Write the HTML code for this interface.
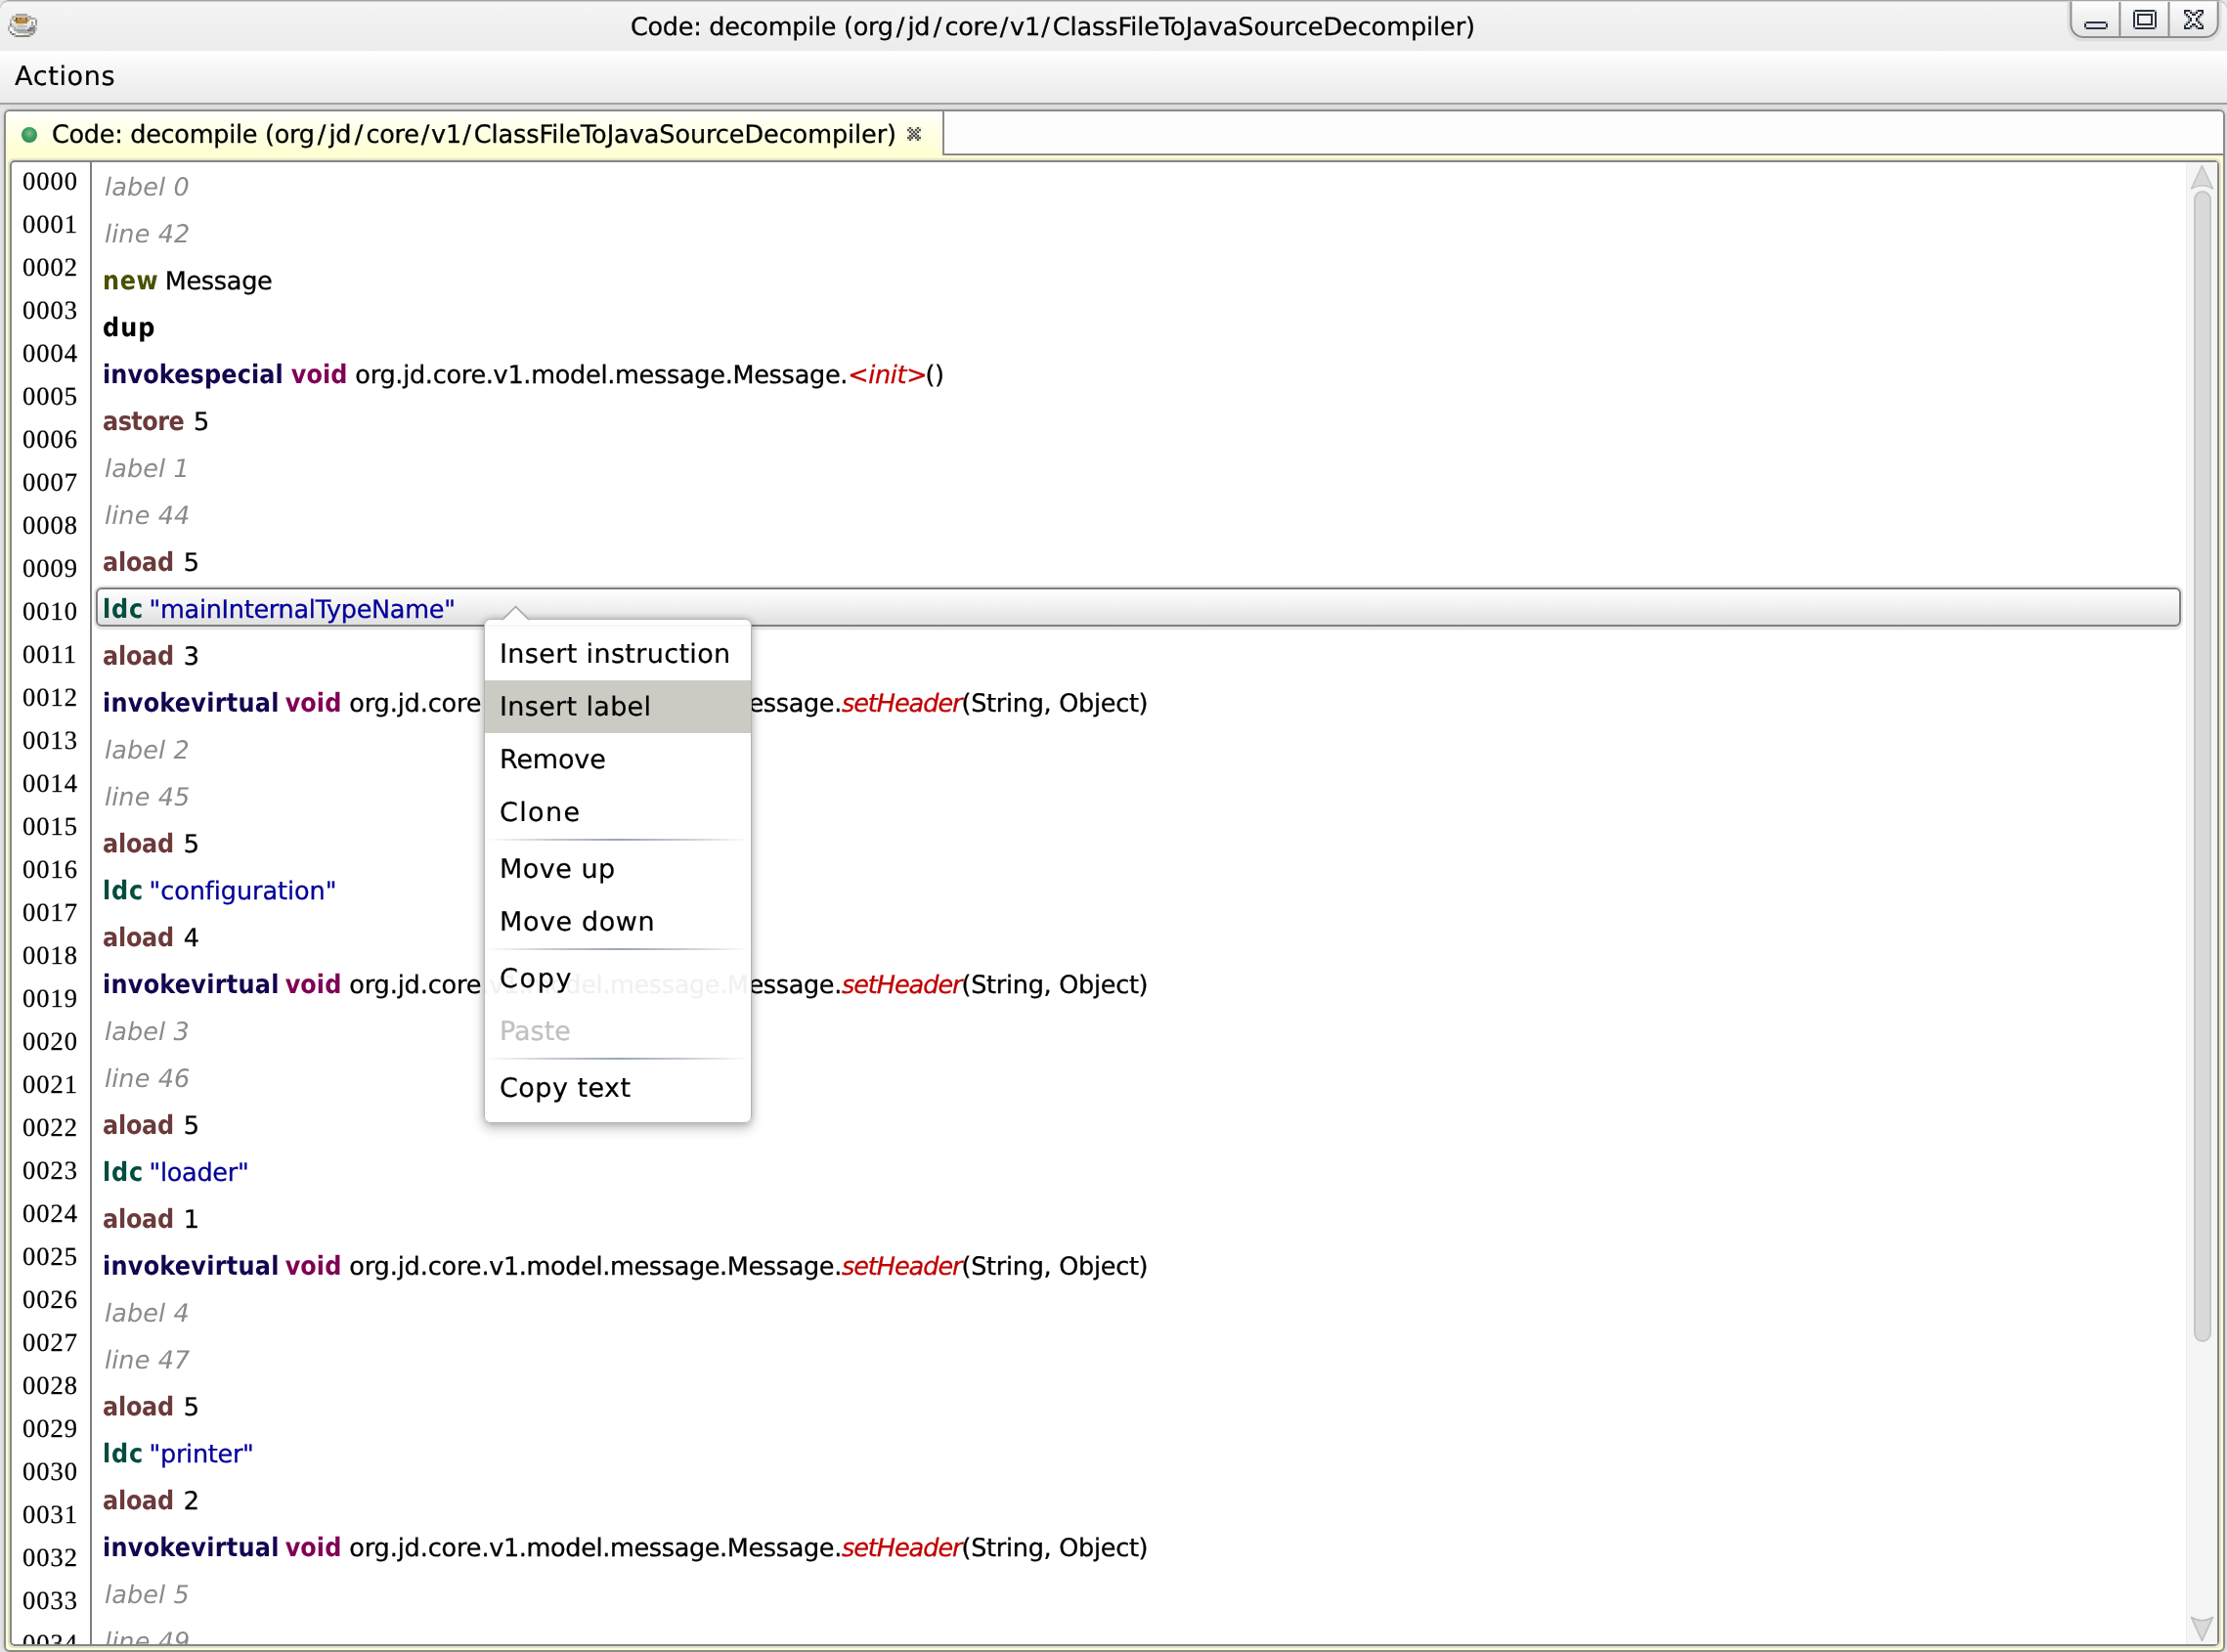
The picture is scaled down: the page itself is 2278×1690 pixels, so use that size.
<!DOCTYPE html>
<html lang="en"><head><meta charset="utf-8"><title>Code: decompile (org/jd/core/v1/ClassFileToJavaSourceDecompiler)</title>
<style>
*{box-sizing:border-box}
html,body{margin:0;padding:0}
body{width:2278px;height:1690px;overflow:hidden;background:#e6e6e6;position:relative;font-family:"DejaVu Sans","Liberation Sans",sans-serif;color:#000;-webkit-font-smoothing:antialiased;text-rendering:geometricPrecision}
#title,#actions,#tabtxt,#lnclip,#rowclip,.pi{will-change:transform}
#actions,.pi{-webkit-text-stroke:0.2px}
#title,#tabtxt{-webkit-text-stroke:0.3px}
.ln{-webkit-text-stroke:0.25px}
.tb{letter-spacing:-0.065px}
.s1{margin:0 3.5px 0 3px}.s2{margin:0 3.3px 0 3.7px}.s3{margin:0 2.1px 0 2.1px}.s4{margin:0 3.1px 0 1.5px}
.abs{position:absolute}
#titlebar{left:0;top:0;width:2278px;height:52px;background:linear-gradient(#f5f5f5,#ebebeb);border-top:1px solid #a4a4a4;border-radius:9px 9px 0 0;box-shadow:inset 0 1px 0 #cfcfcf}
#title{left:645.3px;top:3px;height:50px;line-height:50px;font-size:25.5px;letter-spacing:-0.28px;white-space:pre;text-shadow:0 1px 0 #fff}
#menubar{left:0;top:52px;width:2278px;height:53px;background:linear-gradient(#ffffff,#f3f3f3 50%,#ebebeb)}
#menuline{left:0;top:105px;width:2278px;height:2px;background:#a2a2a2}
#menuline2{left:0;top:107px;width:2278px;height:5px;background:linear-gradient(#dcdcdc,#e8e8e8)}
#actions{left:15px;top:52px;height:53px;line-height:53px;font-size:27px;letter-spacing:0.65px;white-space:pre}
#pane{left:4px;top:112px;width:2272px;height:1578px;border:2px solid #8c8c8c;border-radius:6px;background:#ffffd2;box-shadow:0 0 0 1px #d2d2d2,0 0 4px 1px #cfcfcf}
#strip{left:966px;top:114px;width:1308px;height:43px;background:#fdfdfd;border-radius:0 4px 0 0}
#stripline{left:964px;top:157px;width:1310px;height:2px;background:#8a8a8a}
#tab{left:6px;top:114px;width:958px;height:47px;background:linear-gradient(#fffffc,#ffffe4 50%,#ffffcf);border-radius:4px 0 0 0}
#tabr{left:964px;top:114px;width:2px;height:45px;background:#8c8c8c}
#tabtxt{left:53px;top:115px;height:46px;line-height:46px;font-size:25.5px;letter-spacing:-0.28px;white-space:pre}
#dot{left:22px;top:130px;width:16px;height:16px;border-radius:50%;background:radial-gradient(circle at 50% 40%,#7fbf8f 0,#3f9a62 45%,#1f8450 100%)}
#light{left:8px;top:162px;width:2264px;height:1524px;border:2px solid #e3e3cd;border-radius:6px}
#code{left:10px;top:164px;width:2260px;height:1520px;border:2px solid #858585;border-radius:5px;background:#fff;overflow:hidden}
#gsep{left:92px;top:166px;width:2px;height:1516px;background:#7e7e7e}
.ln{position:absolute;left:23px;height:44px;line-height:44px;font-family:"Liberation Serif","DejaVu Serif",serif;font-size:26.5px;letter-spacing:1px;white-space:pre}
#lnclip{left:12px;top:166px;width:80px;height:1516px;overflow:hidden}
#rowclip{left:94px;top:166px;width:2142px;height:1516px;overflow:hidden}
.row{-webkit-text-stroke:0.3px;position:absolute;left:105px;height:48px;line-height:48px;font-size:25.5px;letter-spacing:-0.28px;white-space:pre}
.b{font-family:"DejaVu Sans Condensed","DejaVu Sans","Liberation Sans",sans-serif;font-weight:bold;font-size:26.6px;letter-spacing:0.2px;-webkit-text-stroke:0}
.cm{color:#8a8a8a;font-style:italic;letter-spacing:0.1px;margin-left:2px;-webkit-text-stroke:0}
.k-new{color:#4c5000;letter-spacing:0.67px;margin-right:-1.5px}
.k-dup{color:#000;letter-spacing:1.03px}
.k-inv{color:#15054f;letter-spacing:0.15px;margin-right:0px}
.k-iv{color:#15054f;letter-spacing:0.27px;margin-right:-1.8px}
.k-void{color:#7f0055;letter-spacing:0.09px;margin-right:0px}
.k-ld{color:#6b3a3a;letter-spacing:-0.22px;margin-right:2px}
.k-st{color:#6b3a3a;letter-spacing:-0.51px;margin-right:2px}
.k-ldc{color:#004d40;letter-spacing:0.8px;margin-right:-2.2px}
.str{color:#00009a}
.pk{letter-spacing:-0.35px}.pka{letter-spacing:-0.12px}
.mt{color:#c00000;font-style:italic;letter-spacing:-1.03px}
.mi{letter-spacing:-0.3px;margin-right:-2px}
#sel{left:98px;top:601px;width:2133px;height:40px;border:2px solid #7f7f7f;border-radius:6px;background:linear-gradient(#ffffff,#f2f2f2 45%,#e0e0e0);box-shadow:0 0 0 2px #e6e6e6,0 2px 2px 1px #dcdcdc}
#track{left:2236px;top:166px;width:32px;height:1516px;background:#f5f5f5;border-left:1px solid #ececec}
#thumb{left:2244px;top:195px;width:18px;height:1178px;border-radius:9px;background:#dadada;border:2px solid #c6c6c6}
#pop{left:495px;top:633px;width:274px;height:516px;border-radius:7px;background:rgba(255,255,255,0.94);border:1.5px solid #b4b4b4;box-shadow:0 5px 12px 1px rgba(0,0,0,0.22),0 0 7px rgba(0,0,0,0.2)}
.pi{position:absolute;left:496px;width:272px;height:54px;line-height:56px;overflow:hidden;padding-left:15px;font-size:27px;letter-spacing:0.2px;white-space:pre}
.psep{position:absolute;left:497px;width:270px;height:2px;background:linear-gradient(90deg,rgba(150,160,175,0),rgba(150,160,175,0.55) 25%,rgba(150,160,175,0.95) 50%,rgba(150,160,175,0.55) 75%,rgba(150,160,175,0))}
</style></head>
<body>
<div id="titlebar" class="abs"></div>
<div id="title" class="abs">Code: decompile (org<span class="s1">/</span>jd<span class="s2">/</span>core<span class="s3">/</span>v1<span class="s4">/</span><span class="tb">ClassFileToJavaSourceDecompiler)</span></div>
<div id="menubar" class="abs"></div>
<div id="actions" class="abs">Actions</div>
<div id="menuline" class="abs"></div>
<div id="menuline2" class="abs"></div>
<div id="pane" class="abs"></div>
<div id="strip" class="abs"></div>
<div id="stripline" class="abs"></div>
<div id="tab" class="abs"></div>
<div id="tabr" class="abs"></div>
<div id="dot" class="abs"></div>
<div id="tabtxt" class="abs">Code: decompile (org<span class="s1">/</span>jd<span class="s2">/</span>core<span class="s3">/</span>v1<span class="s4">/</span><span class="tb">ClassFileToJavaSourceDecompiler)</span></div>
<div id="light" class="abs"></div>
<div id="code" class="abs"></div>
<div id="lnclip" class="abs"><div class="abs" style="left:-12px;top:-166px">
<div class="ln" style="top:163px">0000</div>
<div class="ln" style="top:207px">0001</div>
<div class="ln" style="top:251px">0002</div>
<div class="ln" style="top:295px">0003</div>
<div class="ln" style="top:339px">0004</div>
<div class="ln" style="top:383px">0005</div>
<div class="ln" style="top:427px">0006</div>
<div class="ln" style="top:471px">0007</div>
<div class="ln" style="top:515px">0008</div>
<div class="ln" style="top:559px">0009</div>
<div class="ln" style="top:603px">0010</div>
<div class="ln" style="top:647px">0011</div>
<div class="ln" style="top:691px">0012</div>
<div class="ln" style="top:735px">0013</div>
<div class="ln" style="top:779px">0014</div>
<div class="ln" style="top:823px">0015</div>
<div class="ln" style="top:867px">0016</div>
<div class="ln" style="top:911px">0017</div>
<div class="ln" style="top:955px">0018</div>
<div class="ln" style="top:999px">0019</div>
<div class="ln" style="top:1043px">0020</div>
<div class="ln" style="top:1087px">0021</div>
<div class="ln" style="top:1131px">0022</div>
<div class="ln" style="top:1175px">0023</div>
<div class="ln" style="top:1219px">0024</div>
<div class="ln" style="top:1263px">0025</div>
<div class="ln" style="top:1307px">0026</div>
<div class="ln" style="top:1351px">0027</div>
<div class="ln" style="top:1395px">0028</div>
<div class="ln" style="top:1439px">0029</div>
<div class="ln" style="top:1483px">0030</div>
<div class="ln" style="top:1527px">0031</div>
<div class="ln" style="top:1571px">0032</div>
<div class="ln" style="top:1615px">0033</div>
<div class="ln" style="top:1659px">0034</div>
</div></div>
<div id="gsep" class="abs"></div>
<div id="sel" class="abs"></div>
<div id="rowclip" class="abs"><div class="abs" style="left:-94px;top:-166px">
<div class="row" style="top:168px"><span class="cm">label 0</span></div>
<div class="row" style="top:216px"><span class="cm">line 42</span></div>
<div class="row" style="top:264px"><span class="b k-new">new</span> Message</div>
<div class="row" style="top:312px"><span class="b k-dup">dup</span></div>
<div class="row" style="top:360px"><span class="b k-inv">invokespecial</span> <span class="b k-void">void</span> <span class="pk2">org.jd.core.v1.model.message.Message.</span><span class="mt mi">&lt;init&gt;</span><span class="ar">()</span></div>
<div class="row" style="top:408px"><span class="b k-st">astore</span> <span class="num">5</span></div>
<div class="row" style="top:456px"><span class="cm">label 1</span></div>
<div class="row" style="top:504px"><span class="cm">line 44</span></div>
<div class="row" style="top:552px"><span class="b k-ld">aload</span> <span class="num">5</span></div>
<div class="row" style="top:600px"><span class="b k-ldc">ldc</span> <span class="str">&quot;mainInternalTypeName&quot;</span></div>
<div class="row" style="top:648px"><span class="b k-ld">aload</span> <span class="num">3</span></div>
<div class="row" style="top:696px"><span class="b k-iv">invokevirtual</span> <span class="b k-void">void</span> <span class="pk"><span class="pka">org.jd.core</span>.v1.model.message.Message.</span><span class="mt">setHeader</span><span class="ar">(String, Object)</span></div>
<div class="row" style="top:744px"><span class="cm">label 2</span></div>
<div class="row" style="top:792px"><span class="cm">line 45</span></div>
<div class="row" style="top:840px"><span class="b k-ld">aload</span> <span class="num">5</span></div>
<div class="row" style="top:888px"><span class="b k-ldc">ldc</span> <span class="str" style="letter-spacing:-0.05px">&quot;configuration&quot;</span></div>
<div class="row" style="top:936px"><span class="b k-ld">aload</span> <span class="num">4</span></div>
<div class="row" style="top:984px"><span class="b k-iv">invokevirtual</span> <span class="b k-void">void</span> <span class="pk"><span class="pka">org.jd.core</span>.v1.model.message.Message.</span><span class="mt">setHeader</span><span class="ar">(String, Object)</span></div>
<div class="row" style="top:1032px"><span class="cm">label 3</span></div>
<div class="row" style="top:1080px"><span class="cm">line 46</span></div>
<div class="row" style="top:1128px"><span class="b k-ld">aload</span> <span class="num">5</span></div>
<div class="row" style="top:1176px"><span class="b k-ldc">ldc</span> <span class="str">&quot;loader&quot;</span></div>
<div class="row" style="top:1224px"><span class="b k-ld">aload</span> <span class="num">1</span></div>
<div class="row" style="top:1272px"><span class="b k-iv">invokevirtual</span> <span class="b k-void">void</span> <span class="pk"><span class="pka">org.jd.core</span>.v1.model.message.Message.</span><span class="mt">setHeader</span><span class="ar">(String, Object)</span></div>
<div class="row" style="top:1320px"><span class="cm">label 4</span></div>
<div class="row" style="top:1368px"><span class="cm">line 47</span></div>
<div class="row" style="top:1416px"><span class="b k-ld">aload</span> <span class="num">5</span></div>
<div class="row" style="top:1464px"><span class="b k-ldc">ldc</span> <span class="str">&quot;printer&quot;</span></div>
<div class="row" style="top:1512px"><span class="b k-ld">aload</span> <span class="num">2</span></div>
<div class="row" style="top:1560px"><span class="b k-iv">invokevirtual</span> <span class="b k-void">void</span> <span class="pk"><span class="pka">org.jd.core</span>.v1.model.message.Message.</span><span class="mt">setHeader</span><span class="ar">(String, Object)</span></div>
<div class="row" style="top:1608px"><span class="cm">label 5</span></div>
<div class="row" style="top:1656px"><span class="cm">line 49</span></div>
</div></div>
<div id="track" class="abs"></div>
<div id="thumb" class="abs"></div>

<svg class="abs" style="left:8px;top:14px;opacity:.93" width="30" height="24" viewBox="0 0 30 24" shape-rendering="crispEdges"><rect x="8" y="0" width="2" height="2" fill="#9ca0a6"/><rect x="10" y="0" width="2" height="2" fill="#9ca0a6"/><rect x="12" y="0" width="2" height="2" fill="#9ca0a6"/><rect x="14" y="0" width="2" height="2" fill="#9ca0a6"/><rect x="16" y="0" width="2" height="2" fill="#9ca0a6"/><rect x="18" y="0" width="2" height="2" fill="#9ca0a6"/><rect x="4" y="2" width="2" height="2" fill="#b2b6ba"/><rect x="6" y="2" width="2" height="2" fill="#b2b6ba"/><rect x="8" y="2" width="2" height="2" fill="#c9baa2"/><rect x="10" y="2" width="2" height="2" fill="#c9baa2"/><rect x="12" y="2" width="2" height="2" fill="#c9baa2"/><rect x="14" y="2" width="2" height="2" fill="#c9baa2"/><rect x="16" y="2" width="2" height="2" fill="#c9baa2"/><rect x="18" y="2" width="2" height="2" fill="#c9baa2"/><rect x="20" y="2" width="2" height="2" fill="#a9adb1"/><rect x="22" y="2" width="2" height="2" fill="#a9adb1"/><rect x="2" y="4" width="2" height="2" fill="#dcdcdc"/><rect x="4" y="4" width="2" height="2" fill="#a2a6aa"/><rect x="6" y="4" width="2" height="2" fill="#d8c8b0"/><rect x="8" y="4" width="2" height="2" fill="#7a4a0a"/><rect x="10" y="4" width="2" height="2" fill="#b09060"/><rect x="12" y="4" width="2" height="2" fill="#8a6020"/><rect x="14" y="4" width="2" height="2" fill="#b09868"/><rect x="16" y="4" width="2" height="2" fill="#b09868"/><rect x="18" y="4" width="2" height="2" fill="#8a5a14"/><rect x="20" y="4" width="2" height="2" fill="#d4c4a8"/><rect x="22" y="4" width="2" height="2" fill="#a2a2a6"/><rect x="24" y="4" width="2" height="2" fill="#a2a2a6"/><rect x="26" y="4" width="2" height="2" fill="#a2a2a6"/><rect x="28" y="4" width="2" height="2" fill="#dedede"/><rect x="2" y="6" width="2" height="2" fill="#b4b4b4"/><rect x="4" y="6" width="2" height="2" fill="#e0e8f0"/><rect x="6" y="6" width="2" height="2" fill="#a87830"/><rect x="8" y="6" width="2" height="2" fill="#8a5810"/><rect x="10" y="6" width="2" height="2" fill="#b08848"/><rect x="12" y="6" width="2" height="2" fill="#b08848"/><rect x="14" y="6" width="2" height="2" fill="#b08848"/><rect x="16" y="6" width="2" height="2" fill="#b08848"/><rect x="18" y="6" width="2" height="2" fill="#a06c20"/><rect x="20" y="6" width="2" height="2" fill="#b89050"/><rect x="22" y="6" width="2" height="2" fill="#e8eef6"/><rect x="24" y="6" width="2" height="2" fill="#f6f6f6"/><rect x="26" y="6" width="2" height="2" fill="#f6f6f6"/><rect x="28" y="6" width="2" height="2" fill="#8a8a8a"/><rect x="2" y="8" width="2" height="2" fill="#b8b8b8"/><rect x="4" y="8" width="2" height="2" fill="#e8eef6"/><rect x="6" y="8" width="2" height="2" fill="#e8dcc8"/><rect x="8" y="8" width="2" height="2" fill="#b87828"/><rect x="10" y="8" width="2" height="2" fill="#b87828"/><rect x="12" y="8" width="2" height="2" fill="#b87828"/><rect x="14" y="8" width="2" height="2" fill="#b87828"/><rect x="16" y="8" width="2" height="2" fill="#b87828"/><rect x="18" y="8" width="2" height="2" fill="#b87828"/><rect x="20" y="8" width="2" height="2" fill="#ece4d4"/><rect x="22" y="8" width="2" height="2" fill="#f4f4f4"/><rect x="24" y="8" width="2" height="2" fill="#929292"/><rect x="26" y="8" width="2" height="2" fill="#f2f2f2"/><rect x="28" y="8" width="2" height="2" fill="#929292"/><rect x="2" y="10" width="2" height="2" fill="#7c7c7c"/><rect x="4" y="10" width="2" height="2" fill="#d8d8d8"/><rect x="6" y="10" width="2" height="2" fill="#d8e0ec"/><rect x="8" y="10" width="2" height="2" fill="#d8e0ec"/><rect x="10" y="10" width="2" height="2" fill="#e0c8a0"/><rect x="12" y="10" width="2" height="2" fill="#e0c8a0"/><rect x="14" y="10" width="2" height="2" fill="#e0c8a0"/><rect x="16" y="10" width="2" height="2" fill="#dce4f0"/><rect x="18" y="10" width="2" height="2" fill="#dce4f0"/><rect x="20" y="10" width="2" height="2" fill="#e8e8f0"/><rect x="22" y="10" width="2" height="2" fill="#e8e8f0"/><rect x="24" y="10" width="2" height="2" fill="#a8a2a8"/><rect x="26" y="10" width="2" height="2" fill="#ececec"/><rect x="28" y="10" width="2" height="2" fill="#a0a0a0"/><rect x="0" y="12" width="2" height="2" fill="#c4c4c4"/><rect x="2" y="12" width="2" height="2" fill="#b0b0b0"/><rect x="4" y="12" width="2" height="2" fill="#b4b4b4"/><rect x="6" y="12" width="2" height="2" fill="#d0d0d4"/><rect x="8" y="12" width="2" height="2" fill="#d0d0d4"/><rect x="10" y="12" width="2" height="2" fill="#b8c0c8"/><rect x="12" y="12" width="2" height="2" fill="#b8c0c8"/><rect x="14" y="12" width="2" height="2" fill="#b8c0c8"/><rect x="16" y="12" width="2" height="2" fill="#b8c0c8"/><rect x="18" y="12" width="2" height="2" fill="#b8c0c8"/><rect x="20" y="12" width="2" height="2" fill="#f4f4f4"/><rect x="22" y="12" width="2" height="2" fill="#c8c8c8"/><rect x="24" y="12" width="2" height="2" fill="#b0b0b0"/><rect x="26" y="12" width="2" height="2" fill="#8a8a8a"/><rect x="28" y="12" width="2" height="2" fill="#dcdcdc"/><rect x="0" y="14" width="2" height="2" fill="#a0a0a0"/><rect x="2" y="14" width="2" height="2" fill="#fcfcf8"/><rect x="4" y="14" width="2" height="2" fill="#e8e8e8"/><rect x="6" y="14" width="2" height="2" fill="#a0a4a8"/><rect x="8" y="14" width="2" height="2" fill="#c8ccd0"/><rect x="10" y="14" width="2" height="2" fill="#c8ccd0"/><rect x="12" y="14" width="2" height="2" fill="#c8ccd0"/><rect x="14" y="14" width="2" height="2" fill="#c8ccd0"/><rect x="16" y="14" width="2" height="2" fill="#c8ccd0"/><rect x="18" y="14" width="2" height="2" fill="#e8e8e8"/><rect x="20" y="14" width="2" height="2" fill="#c0c0c0"/><rect x="22" y="14" width="2" height="2" fill="#707070"/><rect x="24" y="14" width="2" height="2" fill="#707070"/><rect x="26" y="14" width="2" height="2" fill="#8a8a84"/><rect x="28" y="14" width="2" height="2" fill="#b4b4b4"/><rect x="0" y="16" width="2" height="2" fill="#b8b8b8"/><rect x="2" y="16" width="2" height="2" fill="#f8f8f4"/><rect x="4" y="16" width="2" height="2" fill="#f8f8f4"/><rect x="6" y="16" width="2" height="2" fill="#b0b0b0"/><rect x="8" y="16" width="2" height="2" fill="#9a9c9c"/><rect x="10" y="16" width="2" height="2" fill="#9a9c9c"/><rect x="12" y="16" width="2" height="2" fill="#9a9c9c"/><rect x="14" y="16" width="2" height="2" fill="#9a9c9c"/><rect x="16" y="16" width="2" height="2" fill="#9a9c9c"/><rect x="18" y="16" width="2" height="2" fill="#a8a8a8"/><rect x="20" y="16" width="2" height="2" fill="#6c6a6c"/><rect x="22" y="16" width="2" height="2" fill="#6c6a6c"/><rect x="24" y="16" width="2" height="2" fill="#8c8c84"/><rect x="26" y="16" width="2" height="2" fill="#8a8a8a"/><rect x="28" y="16" width="2" height="2" fill="#cacaca"/><rect x="2" y="18" width="2" height="2" fill="#6a6a6a"/><rect x="4" y="18" width="2" height="2" fill="#fafaf8"/><rect x="6" y="18" width="2" height="2" fill="#fafaf8"/><rect x="8" y="18" width="2" height="2" fill="#d8d8d4"/><rect x="10" y="18" width="2" height="2" fill="#a8a4a4"/><rect x="12" y="18" width="2" height="2" fill="#a8a4a4"/><rect x="14" y="18" width="2" height="2" fill="#a8a4a4"/><rect x="16" y="18" width="2" height="2" fill="#a8a4a4"/><rect x="18" y="18" width="2" height="2" fill="#a8a4a4"/><rect x="20" y="18" width="2" height="2" fill="#a8a4a4"/><rect x="22" y="18" width="2" height="2" fill="#b8b8a0"/><rect x="24" y="18" width="2" height="2" fill="#b8b8a0"/><rect x="26" y="18" width="2" height="2" fill="#8a8a8a"/><rect x="2" y="20" width="2" height="2" fill="#dadada"/><rect x="4" y="20" width="2" height="2" fill="#666666"/><rect x="6" y="20" width="2" height="2" fill="#a0a0a0"/><rect x="8" y="20" width="2" height="2" fill="#f0f0e4"/><rect x="10" y="20" width="2" height="2" fill="#f0f0e4"/><rect x="12" y="20" width="2" height="2" fill="#f0f0e4"/><rect x="14" y="20" width="2" height="2" fill="#f0f0e4"/><rect x="16" y="20" width="2" height="2" fill="#d8d8c4"/><rect x="18" y="20" width="2" height="2" fill="#d8d8c4"/><rect x="20" y="20" width="2" height="2" fill="#d8d8c4"/><rect x="22" y="20" width="2" height="2" fill="#8c8c88"/><rect x="24" y="20" width="2" height="2" fill="#8c8c88"/><rect x="26" y="20" width="2" height="2" fill="#dcdcdc"/><rect x="6" y="22" width="2" height="2" fill="#b8b8b8"/><rect x="8" y="22" width="2" height="2" fill="#787a78"/><rect x="10" y="22" width="2" height="2" fill="#787a78"/><rect x="12" y="22" width="2" height="2" fill="#787a78"/><rect x="14" y="22" width="2" height="2" fill="#787a78"/><rect x="16" y="22" width="2" height="2" fill="#787a78"/><rect x="18" y="22" width="2" height="2" fill="#787a78"/><rect x="20" y="22" width="2" height="2" fill="#787a78"/><rect x="22" y="22" width="2" height="2" fill="#c0c0c0"/></svg>
<svg class="abs" style="left:2113px;top:0px" width="165" height="52" viewBox="0 0 165 52">
  <defs><linearGradient id="bg" x1="0" y1="0" x2="0" y2="1"><stop offset="0" stop-color="#fdfdfd"/><stop offset="1" stop-color="#e3e3e3"/></linearGradient></defs>
  <path d="M3 1 V26 a15 15 0 0 0 15 15 H143 a15 15 0 0 0 15 -15 V1" fill="none" stroke="#dedede" stroke-width="3"/>
  <path d="M5.4 1.5 V25 a13 13 0 0 0 13 13 H142.7 a13 13 0 0 0 13 -13 V1.5" fill="url(#bg)" stroke="#8c8c8c" stroke-width="2"/>
  <line x1="55.4" y1="2" x2="55.4" y2="39" stroke="#8c8c8c" stroke-width="2"/>
  <line x1="105.5" y1="2" x2="105.5" y2="39" stroke="#8c8c8c" stroke-width="2"/>
  <g shape-rendering="crispEdges">
  <rect x="19" y="22" width="24" height="8" fill="#2e343e"/><rect x="21" y="24" width="20" height="4" fill="#dfe3ec"/>
  <rect x="19" y="22" width="2" height="2" fill="#b9bbbe"/><rect x="41" y="22" width="2" height="2" fill="#b9bbbe"/><rect x="19" y="28" width="2" height="2" fill="#b9bbbe"/><rect x="41" y="28" width="2" height="2" fill="#b9bbbe"/>
  <rect x="69" y="10" width="24" height="20" fill="#2e343e"/><rect x="71" y="12" width="20" height="16" fill="#eef0f8"/>
  <rect x="73" y="14" width="16" height="12" fill="#2e343e"/><rect x="75" y="16" width="12" height="8" fill="#f1f1f1"/>
  <rect x="69" y="10" width="2" height="2" fill="#b9bbbe"/><rect x="91" y="10" width="2" height="2" fill="#b9bbbe"/><rect x="69" y="28" width="2" height="2" fill="#b9bbbe"/><rect x="91" y="28" width="2" height="2" fill="#b9bbbe"/>
  <rect x="121" y="10" width="2" height="2" fill="#272c35"/><rect x="123" y="10" width="2" height="2" fill="#272c35"/><rect x="125" y="10" width="2" height="2" fill="#272c35"/><rect x="127" y="10" width="2" height="2" fill="#a4a7ab"/><rect x="133" y="10" width="2" height="2" fill="#a4a7ab"/><rect x="135" y="10" width="2" height="2" fill="#272c35"/><rect x="137" y="10" width="2" height="2" fill="#272c35"/><rect x="139" y="10" width="2" height="2" fill="#272c35"/><rect x="121" y="12" width="2" height="2" fill="#272c35"/><rect x="123" y="12" width="2" height="2" fill="#eceff6"/><rect x="125" y="12" width="2" height="2" fill="#eceff6"/><rect x="127" y="12" width="2" height="2" fill="#272c35"/><rect x="129" y="12" width="2" height="2" fill="#a4a7ab"/><rect x="131" y="12" width="2" height="2" fill="#a4a7ab"/><rect x="133" y="12" width="2" height="2" fill="#272c35"/><rect x="135" y="12" width="2" height="2" fill="#eceff6"/><rect x="137" y="12" width="2" height="2" fill="#eceff6"/><rect x="139" y="12" width="2" height="2" fill="#272c35"/><rect x="121" y="14" width="2" height="2" fill="#a4a7ab"/><rect x="123" y="14" width="2" height="2" fill="#272c35"/><rect x="125" y="14" width="2" height="2" fill="#eceff6"/><rect x="127" y="14" width="2" height="2" fill="#eceff6"/><rect x="129" y="14" width="2" height="2" fill="#272c35"/><rect x="131" y="14" width="2" height="2" fill="#272c35"/><rect x="133" y="14" width="2" height="2" fill="#eceff6"/><rect x="135" y="14" width="2" height="2" fill="#eceff6"/><rect x="137" y="14" width="2" height="2" fill="#272c35"/><rect x="139" y="14" width="2" height="2" fill="#a4a7ab"/><rect x="123" y="16" width="2" height="2" fill="#a4a7ab"/><rect x="125" y="16" width="2" height="2" fill="#272c35"/><rect x="127" y="16" width="2" height="2" fill="#eceff6"/><rect x="129" y="16" width="2" height="2" fill="#eceff6"/><rect x="131" y="16" width="2" height="2" fill="#eceff6"/><rect x="133" y="16" width="2" height="2" fill="#eceff6"/><rect x="135" y="16" width="2" height="2" fill="#272c35"/><rect x="137" y="16" width="2" height="2" fill="#a4a7ab"/><rect x="125" y="18" width="2" height="2" fill="#a4a7ab"/><rect x="127" y="18" width="2" height="2" fill="#272c35"/><rect x="129" y="18" width="2" height="2" fill="#eceff6"/><rect x="131" y="18" width="2" height="2" fill="#eceff6"/><rect x="133" y="18" width="2" height="2" fill="#272c35"/><rect x="135" y="18" width="2" height="2" fill="#a4a7ab"/><rect x="125" y="20" width="2" height="2" fill="#a4a7ab"/><rect x="127" y="20" width="2" height="2" fill="#272c35"/><rect x="129" y="20" width="2" height="2" fill="#eceff6"/><rect x="131" y="20" width="2" height="2" fill="#eceff6"/><rect x="133" y="20" width="2" height="2" fill="#272c35"/><rect x="135" y="20" width="2" height="2" fill="#a4a7ab"/><rect x="123" y="22" width="2" height="2" fill="#a4a7ab"/><rect x="125" y="22" width="2" height="2" fill="#272c35"/><rect x="127" y="22" width="2" height="2" fill="#eceff6"/><rect x="129" y="22" width="2" height="2" fill="#eceff6"/><rect x="131" y="22" width="2" height="2" fill="#eceff6"/><rect x="133" y="22" width="2" height="2" fill="#eceff6"/><rect x="135" y="22" width="2" height="2" fill="#272c35"/><rect x="137" y="22" width="2" height="2" fill="#a4a7ab"/><rect x="121" y="24" width="2" height="2" fill="#a4a7ab"/><rect x="123" y="24" width="2" height="2" fill="#272c35"/><rect x="125" y="24" width="2" height="2" fill="#eceff6"/><rect x="127" y="24" width="2" height="2" fill="#eceff6"/><rect x="129" y="24" width="2" height="2" fill="#272c35"/><rect x="131" y="24" width="2" height="2" fill="#272c35"/><rect x="133" y="24" width="2" height="2" fill="#eceff6"/><rect x="135" y="24" width="2" height="2" fill="#eceff6"/><rect x="137" y="24" width="2" height="2" fill="#272c35"/><rect x="139" y="24" width="2" height="2" fill="#a4a7ab"/><rect x="121" y="26" width="2" height="2" fill="#272c35"/><rect x="123" y="26" width="2" height="2" fill="#eceff6"/><rect x="125" y="26" width="2" height="2" fill="#eceff6"/><rect x="127" y="26" width="2" height="2" fill="#272c35"/><rect x="129" y="26" width="2" height="2" fill="#a4a7ab"/><rect x="131" y="26" width="2" height="2" fill="#a4a7ab"/><rect x="133" y="26" width="2" height="2" fill="#272c35"/><rect x="135" y="26" width="2" height="2" fill="#eceff6"/><rect x="137" y="26" width="2" height="2" fill="#eceff6"/><rect x="139" y="26" width="2" height="2" fill="#272c35"/><rect x="121" y="28" width="2" height="2" fill="#272c35"/><rect x="123" y="28" width="2" height="2" fill="#272c35"/><rect x="125" y="28" width="2" height="2" fill="#272c35"/><rect x="127" y="28" width="2" height="2" fill="#a4a7ab"/><rect x="133" y="28" width="2" height="2" fill="#a4a7ab"/><rect x="135" y="28" width="2" height="2" fill="#272c35"/><rect x="137" y="28" width="2" height="2" fill="#272c35"/><rect x="139" y="28" width="2" height="2" fill="#272c35"/>
  </g>
</svg>
<svg class="abs" style="left:928px;top:130px" width="14" height="14" viewBox="0 0 14 14" shape-rendering="crispEdges"><rect x="0" y="0" width="2" height="2" fill="#e0e0be"/><rect x="2" y="0" width="2" height="2" fill="#52524e"/><rect x="4" y="0" width="2" height="2" fill="#e0e0be"/><rect x="8" y="0" width="2" height="2" fill="#e0e0be"/><rect x="10" y="0" width="2" height="2" fill="#52524e"/><rect x="12" y="0" width="2" height="2" fill="#e0e0be"/><rect x="0" y="2" width="2" height="2" fill="#52524e"/><rect x="2" y="2" width="2" height="2" fill="#cacaca"/><rect x="4" y="2" width="2" height="2" fill="#52524e"/><rect x="6" y="2" width="2" height="2" fill="#e0e0be"/><rect x="8" y="2" width="2" height="2" fill="#52524e"/><rect x="10" y="2" width="2" height="2" fill="#cacaca"/><rect x="12" y="2" width="2" height="2" fill="#52524e"/><rect x="0" y="4" width="2" height="2" fill="#e0e0be"/><rect x="2" y="4" width="2" height="2" fill="#52524e"/><rect x="4" y="4" width="2" height="2" fill="#cacaca"/><rect x="6" y="4" width="2" height="2" fill="#52524e"/><rect x="8" y="4" width="2" height="2" fill="#cacaca"/><rect x="10" y="4" width="2" height="2" fill="#52524e"/><rect x="12" y="4" width="2" height="2" fill="#e0e0be"/><rect x="2" y="6" width="2" height="2" fill="#e0e0be"/><rect x="4" y="6" width="2" height="2" fill="#52524e"/><rect x="6" y="6" width="2" height="2" fill="#a8a8a8"/><rect x="8" y="6" width="2" height="2" fill="#52524e"/><rect x="10" y="6" width="2" height="2" fill="#e0e0be"/><rect x="0" y="8" width="2" height="2" fill="#e0e0be"/><rect x="2" y="8" width="2" height="2" fill="#52524e"/><rect x="4" y="8" width="2" height="2" fill="#a8a8a8"/><rect x="6" y="8" width="2" height="2" fill="#52524e"/><rect x="8" y="8" width="2" height="2" fill="#a8a8a8"/><rect x="10" y="8" width="2" height="2" fill="#52524e"/><rect x="12" y="8" width="2" height="2" fill="#e0e0be"/><rect x="0" y="10" width="2" height="2" fill="#52524e"/><rect x="2" y="10" width="2" height="2" fill="#8a8a8a"/><rect x="4" y="10" width="2" height="2" fill="#52524e"/><rect x="6" y="10" width="2" height="2" fill="#e0e0be"/><rect x="8" y="10" width="2" height="2" fill="#52524e"/><rect x="10" y="10" width="2" height="2" fill="#8a8a8a"/><rect x="12" y="10" width="2" height="2" fill="#52524e"/><rect x="0" y="12" width="2" height="2" fill="#e0e0be"/><rect x="2" y="12" width="2" height="2" fill="#52524e"/><rect x="4" y="12" width="2" height="2" fill="#e0e0be"/><rect x="8" y="12" width="2" height="2" fill="#e0e0be"/><rect x="10" y="12" width="2" height="2" fill="#52524e"/><rect x="12" y="12" width="2" height="2" fill="#e0e0be"/></svg>
<svg class="abs" style="left:2238px;top:166px" width="30" height="32" viewBox="0 0 30 32">
  <path d="M14.5 3.5 L25.5 27 Q14.5 20.5 3.5 27 Z" fill="#dadada" stroke="#c4c4c4" stroke-width="1.6" stroke-linejoin="round"/>
</svg>
<svg class="abs" style="left:2238px;top:1650px" width="30" height="32" viewBox="0 0 30 32">
  <path d="M14.5 28.5 L25.5 4.5 Q14.5 11 3.5 4.5 Z" fill="#dadada" stroke="#bdbdbd" stroke-width="1.6" stroke-linejoin="round"/>
</svg>

<div id="pop" class="abs"></div>

<svg class="abs" style="left:508px;top:616px" width="40" height="20" viewBox="0 0 40 20">
  <path d="M5.5 18.5 L19.5 4.5 L33.5 18.5" fill="#fdfdfd" stroke="#a4a4a4" stroke-width="1.6" stroke-linejoin="round"/>
  <rect x="6" y="17.8" width="27" height="2.2" fill="#fdfdfd"/>
</svg>

<div class="pi" style="top:642px;letter-spacing:0.36px;">Insert instruction</div><div class="pi" style="top:696px;letter-spacing:0.34px;background:#cbcbc3;">Insert label</div><div class="pi" style="top:750px;letter-spacing:-0.16px;">Remove</div><div class="pi" style="top:804px;letter-spacing:1.35px;">Clone</div><div class="pi" style="top:862px;letter-spacing:0.5px;">Move up</div><div class="pi" style="top:916px;letter-spacing:0.6px;">Move down</div><div class="pi" style="top:974px;letter-spacing:1.7px;">Copy</div><div class="pi" style="top:1028px;letter-spacing:0;color:#c0c0c0;">Paste</div><div class="pi" style="top:1086px;letter-spacing:0.47px;">Copy text</div><div class="psep" style="top:858px"></div><div class="psep" style="top:970px"></div><div class="psep" style="top:1082px"></div>
</body></html>
